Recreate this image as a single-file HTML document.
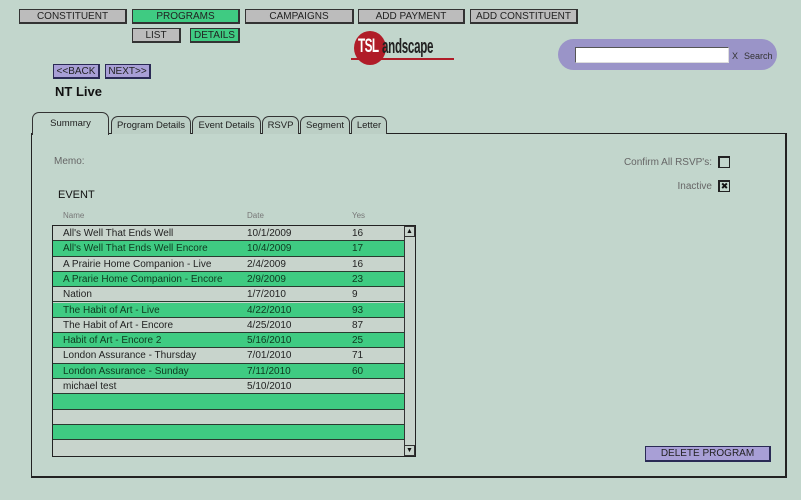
<!DOCTYPE html>
<html><head><meta charset="utf-8"><style>
*{box-sizing:border-box;margin:0;padding:0}
body{width:801px;height:500px;background:#c2d6cc;font-family:"Liberation Sans",Arial,sans-serif;position:relative;overflow:hidden;color:#111}
.a{position:absolute}
.btn{position:absolute;height:15px;border:1px solid #333;border-bottom-width:2px;border-right-width:2px;background:#bcbcbc;font-size:10px;text-align:center;line-height:13px;color:#222}
.g{background:#3fcb82}
.p{background:#a89fd6;border-color:#2a2a55}
.tab{position:absolute;top:116px;height:18px;border:1px solid #333;border-bottom:none;border-radius:7px 7px 0 0;background:#bccfc5;font-size:9.5px;text-align:center;line-height:17px;color:#222;white-space:nowrap;overflow:hidden}
.row{position:absolute;left:53px;width:351px;height:15.3px;border-bottom:1px solid #2a3a30;font-size:10px;line-height:15px;background:#c8d4cc;color:#222}
.row.g{background:#3fcb82;color:#0f3a1f}
.row span{position:absolute;top:0}
.lbl{font-size:10px;color:#666}
</style></head><body>
<div class="btn" style="left:19px;top:9px;width:108px">CONSTITUENT</div>
<div class="btn g" style="left:132px;top:9px;width:108px">PROGRAMS</div>
<div class="btn" style="left:245px;top:9px;width:109px">CAMPAIGNS</div>
<div class="btn" style="left:358px;top:9px;width:107px">ADD PAYMENT</div>
<div class="btn" style="left:470px;top:9px;width:108px">ADD CONSTITUENT</div>
<div class="btn" style="left:132px;top:28px;width:49px">LIST</div>
<div class="btn g" style="left:190px;top:28px;width:50px">DETAILS</div>
<div class="btn p" style="left:53px;top:64px;width:47px">&lt;&lt;BACK</div>
<div class="btn p" style="left:105px;top:64px;width:46px">NEXT&gt;&gt;</div>
<div class="a" style="left:55px;top:84px;font-size:13px;font-weight:bold">NT Live</div>

<!-- logo -->
<div class="a" style="left:351px;top:58px;width:103px;height:2px;background:#b01c28"></div>
<div class="a" style="left:354px;top:31px;width:32px;height:34px;border-radius:50%;background:#b01c28"></div>
<div class="a" style="left:358px;top:36px;font-size:19px;font-weight:bold;color:#fff;letter-spacing:-1px;transform:scaleX(.62);transform-origin:left">TSL</div>
<div class="a" style="left:382px;top:36px;font-size:20px;font-weight:bold;color:#222;letter-spacing:-0.5px;transform:scaleX(.58);transform-origin:left">andscape</div>

<!-- search -->
<div class="a" style="left:558px;top:39px;width:219px;height:31px;border-radius:16px;background:#9a94c8"></div>
<div class="a" style="left:575px;top:47px;width:154px;height:16px;background:#fff;border:1px solid #555;border-right-color:#ddd;border-bottom-color:#ddd"></div>
<div class="a" style="left:732px;top:51px;font-size:9px;color:#333">X</div>
<div class="a" style="left:744px;top:51px;font-size:9px;color:#333">Search</div>

<!-- panel -->
<div class="a" style="left:31px;top:133px;width:756px;height:345px;border:1px solid #222;border-right-width:2px;border-bottom-width:2px"></div>
<div class="tab" style="left:32px;top:112px;width:77px;height:23px;background:#c2d6cc;line-height:22px;z-index:2">Summary</div>
<div class="tab" style="left:111px;width:80px">Program Details</div>
<div class="tab" style="left:192px;width:69px">Event Details</div>
<div class="tab" style="left:262px;width:37px">RSVP</div>
<div class="tab" style="left:300px;width:50px">Segment</div>
<div class="tab" style="left:351px;width:36px">Letter</div>

<div class="a lbl" style="left:54px;top:156px">Memo:</div>
<div class="a" style="left:58px;top:189px;font-size:11px">EVENT</div>
<div class="a" style="left:63px;top:211px;font-size:8px;color:#777">Name</div>
<div class="a" style="left:247px;top:211px;font-size:8px;color:#777">Date</div>
<div class="a" style="left:352px;top:211px;font-size:8px;color:#777">Yes</div>

<div class="a lbl" style="left:560px;top:157px;width:152px;text-align:right">Confirm All RSVP's:</div>
<div class="a" style="left:718px;top:156px;width:12px;height:12px;border:1px solid #222;border-left-width:2px;border-top-width:2px"></div>
<div class="a lbl" style="left:560px;top:181px;width:152px;text-align:right">Inactive</div>
<div class="a" style="left:718px;top:180px;width:12px;height:12px;border:1px solid #222;border-left-width:2px;border-top-width:2px;font-size:9px;line-height:9px;text-align:center">&#x2716;</div>

<!-- table -->
<div class="a" style="left:52px;top:225px;width:364px;height:232px;border:1px solid #222;background:#c8d4cc"></div>
<div class="row" style="top:226px"><span style="left:10px">All's Well That Ends Well</span><span style="left:194px">10/1/2009</span><span style="left:299px">16</span></div>
<div class="row g" style="top:241.3px"><span style="left:10px">All's Well That Ends Well Encore</span><span style="left:194px">10/4/2009</span><span style="left:299px">17</span></div>
<div class="row" style="top:256.6px"><span style="left:10px">A Prairie Home Companion - Live</span><span style="left:194px">2/4/2009</span><span style="left:299px">16</span></div>
<div class="row g" style="top:271.9px"><span style="left:10px">A Prarie Home Companion - Encore</span><span style="left:194px">2/9/2009</span><span style="left:299px">23</span></div>
<div class="row" style="top:287.2px"><span style="left:10px">Nation</span><span style="left:194px">1/7/2010</span><span style="left:299px">9</span></div>
<div class="row g" style="top:302.5px"><span style="left:10px">The Habit of Art - Live</span><span style="left:194px">4/22/2010</span><span style="left:299px">93</span></div>
<div class="row" style="top:317.8px"><span style="left:10px">The Habit of Art - Encore</span><span style="left:194px">4/25/2010</span><span style="left:299px">87</span></div>
<div class="row g" style="top:333.1px"><span style="left:10px">Habit of Art - Encore 2</span><span style="left:194px">5/16/2010</span><span style="left:299px">25</span></div>
<div class="row" style="top:348.4px"><span style="left:10px">London Assurance - Thursday</span><span style="left:194px">7/01/2010</span><span style="left:299px">71</span></div>
<div class="row g" style="top:363.7px"><span style="left:10px">London Assurance - Sunday</span><span style="left:194px">7/11/2010</span><span style="left:299px">60</span></div>
<div class="row" style="top:379px"><span style="left:10px">michael test</span><span style="left:194px">5/10/2010</span></div>
<div class="row g" style="top:394.3px"></div>
<div class="row" style="top:409.6px"></div>
<div class="row g" style="top:424.9px"></div>
<div class="row" style="top:440.2px;border-bottom:none"></div>
<div class="a" style="left:404px;top:226px;width:11px;height:230px;border-left:1px solid #333;background:#c8d4cc"></div>
<div class="a" style="left:404px;top:226px;width:11px;height:11px;border:1px solid #333;font-size:7px;text-align:center;line-height:9px">&#9650;</div>
<div class="a" style="left:404px;top:445px;width:11px;height:11px;border:1px solid #333;font-size:7px;text-align:center;line-height:9px">&#9660;</div>

<div class="btn p" style="left:645px;top:446px;width:126px;height:16px;line-height:13px">DELETE PROGRAM</div>
</body></html>
